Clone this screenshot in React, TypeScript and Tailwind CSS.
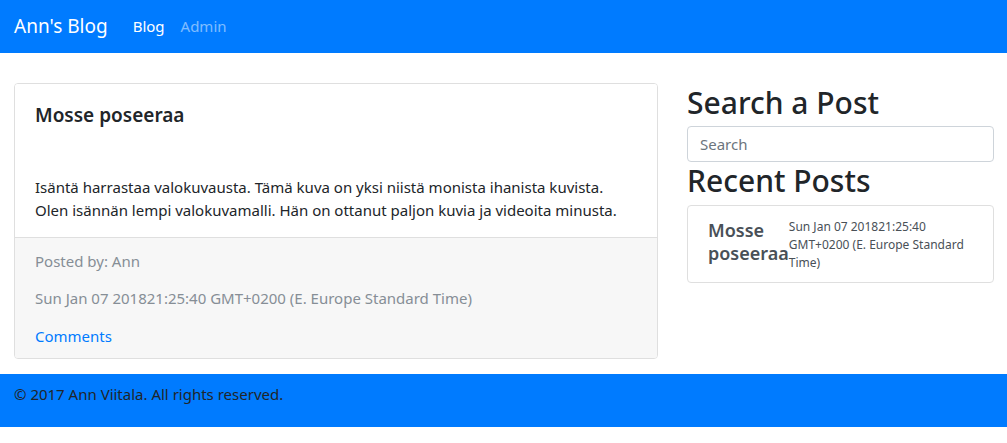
import React from "react";

const font = { fontFamily: '"Noto Sans", "Open Sans", sans-serif' };

const post = {
  title: "Mosse poseeraa",
  body: "Isäntä harrastaa valokuvausta. Tämä kuva on yksi niistä monista ihanista kuvista. Olen isännän lempi valokuvamalli. Hän on ottanut paljon kuvia ja videoita minusta.",
  author: "Ann",
  date: "Sun Jan 07 201821:25:40 GMT+0200 (E. Europe Standard Time)",
};

export default function App() {
  return (
    <div className="min-h-[443px] bg-white text-[#212529] font-['Noto_Sans',sans-serif] text-[16px]">
      {/* Navbar */}
      <nav className="h-[53px] bg-[#007bff] flex items-center px-[14px]">
        <span className="text-[19px] text-white mr-[25px]">Ann's Blog</span>
        <span className="text-[15px] text-white mr-[16px]">Blog</span>
        <span className="text-[15px] text-white/50">Admin</span>
      </nav>

      {/* Content */}
      <div className="flex">
        <div className="w-[672px] px-[14px] pt-[30px] pb-[15px]">
          <div className="border border-[#dfdfdf] rounded-[4px] overflow-hidden">
            <div className="px-[20px] pt-[20px] pb-[15px] bg-white">
              <h5 className="text-[19px] font-semibold leading-[1.2] mb-[49px]">{post.title}</h5>
              <p className="leading-[23px] text-[15px]">{post.body}</p>
            </div>
            <div className="bg-[#f7f7f7] border-t border-[#dfdfdf] px-[20px] pt-[12px] pb-[11px] text-[15px] text-[#868e96]">
              <p className="mb-[15px]">Posted by: {post.author}</p>
              <p className="mb-[15px]">{post.date}</p>
              <a className="text-[#007bff]">Comments</a>
            </div>
          </div>
        </div>

        <div className="flex-1 px-[15px] pt-[32px] pr-[13px]">
          <h2 className="text-[30px] font-medium leading-[1.2]">Search a Post</h2>
          <input
            placeholder="Search"
            className="mt-[5px] w-full h-[36px] border border-[#ced4da] rounded-[4px] px-[12px] text-[15px] placeholder:text-[#6c757d] outline-none"
            style={font}
          />
          <h2 className="text-[30px] font-medium leading-[1.2] mt-[1px]">Recent Posts</h2>
          <div className="mt-[6px] border border-[#dfdfdf] rounded-[4px] px-[20px] pt-[12px] pb-[10px] flex">
            <h5 className="text-[18px] font-semibold leading-[1.3] text-[#495057] mt-[1px] shrink-0">
              Mosse<br />poseeraa
            </h5>
            <p className="text-[12px] leading-[18px] text-[#495057] pr-[4px]">{post.date}</p>
          </div>
        </div>
      </div>

      {/* Footer */}
      <footer className="h-[53px] bg-[#007bff] px-[14px] pt-[9px] text-[15px] text-[#212529]">
        © 2017 Ann Viitala. All rights reserved.
      </footer>
    </div>
  );
}
